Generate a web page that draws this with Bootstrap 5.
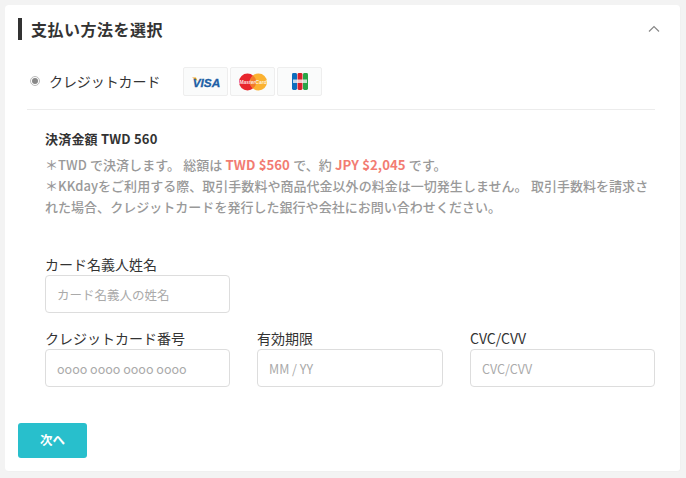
<!DOCTYPE html>
<html lang="ja"><head><meta charset="utf-8">
<link href="https://cdn.jsdelivr.net/npm/bootstrap@5.3.0/dist/css/bootstrap.min.css" rel="stylesheet">
<style>
html,body{height:478px;overflow:hidden}
body{background:#f3f3f3;font-family:"Noto Sans CJK JP","Noto Sans",sans-serif;color:#333;padding:5px 5px 6px;font-size:14px}
.pay-panel{background:#fff;border-radius:4px;height:467px;padding:13px 13px 0;border:1px solid #f0f0f0;border-width:0 1px 1px 0}
.pay-title{border-left:4px solid #333;height:22px;padding-left:9px;font-size:16px;font-weight:700;line-height:22px;letter-spacing:.5px}
.chev{margin-right:7px}
.method-row{height:33px;margin:25px 0 0 12px;padding:0}
.radio-mark{width:10px;height:10px;border-radius:50%;border:1px solid #bbb;background:#fff;display:flex;align-items:center;justify-content:center;margin:0 9px 1px 0}
.radio-mark i{display:block;width:6px;height:6px;border-radius:50%;background:#888}
.method-name{font-size:14px;line-height:20px;width:134px;letter-spacing:-.08px;margin-bottom:2px}
.card-chip{width:45px;height:29px;border:1px solid #eee;border-radius:2px;background:#fafbfb;margin-right:2px;display:flex;align-items:center;justify-content:center}
.rule{height:1px;background:#ececec;margin:11px 0 0 9px;width:628px}
.info-wrap{padding:19px 0 0 27px;width:634px}
.amt{font-size:13px;font-weight:700;line-height:19px;margin-bottom:6px;letter-spacing:.2px}
.note{font-size:13px;line-height:21px;color:#999;font-weight:500;letter-spacing:.03px;word-spacing:.3px}
.note b{color:#f27c72;font-weight:700;font-size:13.2px}
.field-lab{font-size:14px;line-height:18px;margin-bottom:2px;color:#333;display:block}
.field-in{height:38px;border:1px solid #ddd;border-radius:4px;width:100%;font-size:12.5px;padding:0 11px;color:#999;line-height:36px;background:#fff}
.field-in::placeholder{color:#aaa;opacity:1}
.form-grid{margin:0 0 0 27px;width:610px;display:grid;grid-template-columns:185px 186px 185px;column-gap:27px}
.form-one{margin-top:38px}
.form-two{margin-top:16px}
.go-btn{background:#28bfcc;color:#fff;border:0;border-radius:3px;width:69px;height:35px;font-size:12.5px;font-weight:700;padding:0;margin-top:36px;display:block}
</style></head><body>
<div class="pay-panel">
 <div class="d-flex justify-content-between align-items-center">
  <div class="pay-title">支払い方法を選択</div>
  <svg class="chev" width="12" height="8" viewBox="0 0 12 8"><path d="M1 6.5 6 1.5l5 5" fill="none" stroke="#888" stroke-width="1.2"/></svg>
 </div>
 <div class="method-row d-flex align-items-center">
  <span class="radio-mark"><i></i></span>
  <span class="method-name">クレジットカード</span>
  <span class="card-chip"><svg width="30" height="14" viewBox="0 0 30 14"><path d="M1 2.5 6.5 6 5 2.5z" fill="#f3a21d"/><text x="15.5" y="12" text-anchor="middle" font-family="Liberation Sans" font-size="11.8" font-weight="700" font-style="italic" fill="#1d5fa5" stroke="#1d5fa5" stroke-width=".3">VISA</text></svg></span>
  <span class="card-chip"><svg width="30" height="18" viewBox="0 0 30 18"><circle cx="9.5" cy="9" r="8.5" fill="#e8262d"/><circle cx="20.5" cy="9" r="8.5" fill="#fbb231"/><path d="M15 2.4a8.5 8.5 0 0 1 0 13.2 8.5 8.5 0 0 1 0-13.2z" fill="#f37a2a"/><text x="15" y="10.8" text-anchor="middle" font-family="Liberation Sans" font-size="5" font-weight="700" font-style="italic" fill="#fff" opacity=".85">MasterCard</text></svg></span>
  <span class="card-chip"><svg width="16" height="17" viewBox="0 0 16 17"><rect x="0" y="0" width="5" height="17" rx="1.4" fill="#0d6ebd"/><rect x="5.5" y="0" width="5" height="17" rx="1.4" fill="#d9232e"/><rect x="11" y="0" width="5" height="17" rx="1.4" fill="#29a546"/><rect x="1" y="6.5" width="14" height="3.5" fill="#fff" opacity=".75"/></svg></span>
 </div>
 <div class="rule"></div>
 <div class="info-wrap">
  <div class="amt">決済金額 TWD 560</div>
  <div class="note">＊TWD で決済します。 総額は <b>TWD $560</b> で、約 <b>JPY $2,045</b> です。<br>＊KKdayをご利用する際、取引手数料や商品代金以外の料金は一切発生しません。 取引手数料を請求された場合、クレジットカードを発行した銀行や会社にお問い合わせください。</div>
 </div>
 <div class="form-grid form-one">
  <div><label class="field-lab" for="a1">カード名義人姓名</label><input id="a1" class="field-in" placeholder="カード名義人の姓名"></div>
 </div>
 <div class="form-grid form-two">
  <div><label class="field-lab" for="a2">クレジットカード番号</label><input id="a2" class="field-in" placeholder="oooo oooo oooo oooo"></div>
  <div><label class="field-lab" for="a3">有効期限</label><input id="a3" class="field-in" placeholder="MM / YY"></div>
  <div><label class="field-lab" for="a4">CVC/CVV</label><input id="a4" class="field-in" placeholder="CVC/CVV"></div>
 </div>
 <button class="go-btn btn">次へ</button>
</div>
<script src="https://cdn.jsdelivr.net/npm/bootstrap@5.3.0/dist/js/bootstrap.bundle.min.js"></script>
</body></html>
